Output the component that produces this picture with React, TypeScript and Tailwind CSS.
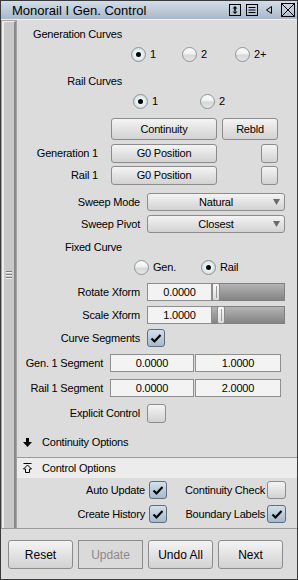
import React from "react";

function Radio({ checked, label }: { checked?: boolean; label: string }) {
  return (
    <div className="flex items-center">
      <div
        className={
          "flex h-[15px] w-[15px] items-center justify-center rounded-full border border-[#8e9498] " +
          (checked
            ? "bg-[radial-gradient(circle_at_50%_50%,#ffffff_0%,#e6f0f2_45%,#b9cbd2_100%)]"
            : "bg-[linear-gradient(#fbfbfb_0%,#f0f0f0_48%,#d6d6d6_52%,#e6e6e6_100%)]")
        }
      >
        {checked && <div className="h-[5px] w-[5px] rounded-full bg-black" />}
      </div>
      <span className="ml-[4px]">{label}</span>
    </div>
  );
}

function Btn({ className = "", children }: { className?: string; children?: React.ReactNode }) {
  return (
    <div
      className={
        "flex items-center justify-center rounded-[3px] border border-[#8c8c8c] bg-gradient-to-b from-[#f4f4f4] to-[#d2d2d2] " +
        className
      }
    >
      {children}
    </div>
  );
}

function Check({ checked, className = "" }: { checked?: boolean; className?: string }) {
  return (
    <div
      className={
        "flex items-center justify-center rounded-[3px] border " +
        (checked
          ? "border-[#5f6e7c] bg-gradient-to-b from-[#d4e0ea] to-[#a6b9cb] "
          : "border-[#8c8c8c] bg-gradient-to-b from-[#f4f4f4] to-[#d2d2d2] ") +
        className
      }
    >
      {checked && (
        <svg width="12" height="11" viewBox="0 0 12 11">
          <path d="M1.5 5.5 L4.5 8.5 L10.5 2" fill="none" stroke="#000" strokeWidth="2.2" />
        </svg>
      )}
    </div>
  );
}

function Field({ value, className = "" }: { value: string; className?: string }) {
  return (
    <div className={"flex items-center justify-center border border-[#8e8e8e] bg-[#f3f3f3] " + className}>
      {value}
    </div>
  );
}

function Dropdown({ value }: { value: string }) {
  return (
    <Btn className="relative h-[18px] w-[138px]">
      <span>{value}</span>
      <svg className="absolute right-[4px] top-[5px]" width="7" height="6" viewBox="0 0 7 6">
        <path d="M0 0 H7 L3.5 6 Z" fill="#6a6a6a" />
      </svg>
    </Btn>
  );
}

function Slider({ value, pos }: { value: string; pos: number }) {
  return (
    <div className="flex h-[18px]">
      <Field value={value} className="h-[18px] w-[65px]" />
      <div className="relative h-[18px] w-[73px] border-y border-r border-[#808080] bg-gradient-to-b from-[#b4b4b4] to-[#848484]">
        <div
          className="absolute top-[-1px] flex h-[18px] w-[8px] justify-center gap-[2px] rounded-[2px] border border-[#8a8a8a] bg-gradient-to-b from-[#fafafa] to-[#dcdcdc]"
          style={{ left: pos }}
        >
          <div className="mt-[2px] h-[12px] w-[1px] bg-[#9a9a9a]" />
        </div>
      </div>
    </div>
  );
}

export default function App() {
  return (
    <div className="flex h-[580px] w-[298px] flex-col border border-[#3a3a3a] bg-[#dcdcdc] font-['Liberation_Sans',Arial,sans-serif] text-[11px] leading-none text-black">
      {/* Title bar */}
      <div className="flex h-[19px] items-center border-b border-[#eef2f6] bg-gradient-to-b from-[#d3dde8] to-[#a9b8c8] pl-[11px] pr-[2px]">
        <span className="flex-1 text-[13px]">Monorail I Gen. Control</span>
        <svg width="66" height="14" viewBox="0 0 66 14">
          <rect x="0.5" y="1.5" width="11" height="11" fill="none" stroke="#000" />
          <path d="M6 3 L8.5 5.5 H3.5 Z M6 11 L8.5 8.5 H3.5 Z M5.2 5 H6.8 V9 H5.2 Z" fill="#000" />
          <rect x="17.5" y="1.5" width="11" height="11" fill="none" stroke="#000" />
          <path d="M19.5 4.5 H26.5 M19.5 7 H26.5 M19.5 9.5 H26.5" stroke="#000" />
          <path d="M42.5 3.5 L37.5 7 L42.5 10.5 Z" fill="none" stroke="#000" />
          <rect x="52.5" y="0.5" width="13" height="13" fill="none" stroke="#000" />
          <path d="M52.5 0.5 L65.5 13.5 M65.5 0.5 L52.5 13.5" stroke="#000" />
        </svg>
      </div>

      {/* Body */}
      <div className="flex h-[508px]">
        {/* Left strip */}
        <div className="flex w-[16px] flex-col bg-[#a2a2a2] pl-[1px] pr-[1px] pt-[1px]">
          <div className="flex flex-1 items-center justify-center border-l-[2px] border-r-[2px] border-t border-l-[#eeeeee] border-r-[#8a8a8a] border-t-[#f0f0f0] bg-[#c9c9c9]">
            <div className="flex flex-col gap-[1px] pr-[1px]">
              <div className="h-[2px] w-[6px] border-b border-[#f0f0f0] bg-[#7a7a7a]" />
              <div className="h-[2px] w-[6px] border-b border-[#f0f0f0] bg-[#7a7a7a]" />
              <div className="h-[2px] w-[6px] border-b border-[#f0f0f0] bg-[#7a7a7a]" />
            </div>
          </div>
        </div>

        {/* Content */}
        <div className="flex flex-1 flex-col tracking-[-0.2px]">
          <div className="mt-[6px] flex h-[16px] items-center">
            <div className="w-[105px] text-right">Generation Curves</div>
          </div>
          <div className="mt-[4px] flex h-[16px] items-center pl-[114px]">
            <div className="w-[51px]"><Radio checked label="1" /></div>
            <div className="w-[53px]"><Radio label="2" /></div>
            <Radio label="2+" />
          </div>

          <div className="mt-[11px] flex h-[16px] items-center">
            <div className="w-[105px] text-right">Rail Curves</div>
          </div>
          <div className="mt-[4px] flex h-[16px] items-center pl-[116px]">
            <div className="w-[67px]"><Radio checked label="1" /></div>
            <Radio label="2" />
          </div>

          <div className="mt-[9px] flex h-[22px] pl-[94px]">
            <Btn className="w-[106px]">Continuity</Btn>
            <Btn className="ml-[5px] w-[56px]">Rebld</Btn>
          </div>

          <div className="mt-[4px] flex h-[19px] items-center">
            <div className="w-[81px] text-right">Generation 1</div>
            <Btn className="ml-[13px] h-[19px] w-[106px]">G0 Position</Btn>
            <Btn className="ml-[44px] h-[19px] w-[17px]" />
          </div>
          <div className="mt-[3px] flex h-[19px] items-center">
            <div className="w-[81px] text-right">Rail 1</div>
            <Btn className="ml-[13px] h-[19px] w-[106px]">G0 Position</Btn>
            <Btn className="ml-[44px] h-[19px] w-[17px]" />
          </div>

          <div className="mt-[8px] flex h-[18px] items-center">
            <div className="w-[123px] text-right">Sweep Mode</div>
            <div className="ml-[7px]"><Dropdown value="Natural" /></div>
          </div>
          <div className="mt-[4px] flex h-[18px] items-center">
            <div className="w-[123px] text-right">Sweep Pivot</div>
            <div className="ml-[7px]"><Dropdown value="Closest" /></div>
          </div>

          <div className="mt-[6px] flex h-[16px] items-center">
            <div className="w-[105px] text-right">Fixed Curve</div>
          </div>
          <div className="mt-[4px] flex h-[16px] items-center pl-[117px]">
            <div className="w-[67px]"><Radio label="Gen." /></div>
            <Radio checked label="Rail" />
          </div>

          <div className="mt-[8px] flex h-[18px] items-center">
            <div className="w-[123px] text-right">Rotate Xform</div>
            <div className="ml-[7px]"><Slider value="0.0000" pos={0} /></div>
          </div>
          <div className="mt-[5px] flex h-[18px] items-center">
            <div className="w-[123px] text-right">Scale Xform</div>
            <div className="ml-[7px]"><Slider value="1.0000" pos={5} /></div>
          </div>

          <div className="mt-[5px] flex h-[18px] items-center">
            <div className="w-[123px] text-right">Curve Segments</div>
            <Check checked className="ml-[7px] h-[18px] w-[18px]" />
          </div>

          <div className="mt-[7px] flex h-[18px] items-center">
            <div className="w-[86px] text-right">Gen. 1 Segment</div>
            <Field value="0.0000" className="ml-[7px] h-[18px] w-[84px]" />
            <Field value="1.0000" className="ml-[1px] h-[18px] w-[86px]" />
          </div>
          <div className="mt-[7px] flex h-[18px] items-center">
            <div className="w-[86px] text-right">Rail 1 Segment</div>
            <Field value="0.0000" className="ml-[7px] h-[18px] w-[84px]" />
            <Field value="2.0000" className="ml-[1px] h-[18px] w-[86px]" />
          </div>

          <div className="mt-[7px] flex h-[19px] items-center">
            <div className="w-[123px] text-right">Explicit Control</div>
            <Check className="ml-[7px] h-[19px] w-[19px]" />
          </div>

          <div className="mt-[11px] flex h-[16px] items-center pl-[6px]">
            <svg width="9" height="9" viewBox="0 0 9 9">
              <path d="M3 0 H6 V4 H9 L4.5 9 L0 4 H3 Z" fill="#000" />
            </svg>
            <span className="ml-[10px]">Continuity Options</span>
          </div>

          <div className="mt-[7px] flex h-[21px] items-center border-t border-[#9c9c9c] bg-[#ececec] pl-[6px]">
            <svg width="9" height="10" viewBox="0 0 9 10">
              <path d="M0.5 0.5 H8.5" stroke="#000" />
              <path d="M4.5 2 L8.5 6 H6.5 V9.5 H2.5 V6 H0.5 Z" fill="none" stroke="#000" strokeLinejoin="miter" />
            </svg>
            <span className="ml-[10px]">Control Options</span>
          </div>

          <div className="mt-[3px] flex h-[18px] items-center">
            <div className="w-[128px] text-right">Auto Update</div>
            <Check checked className="ml-[4px] h-[18px] w-[18px]" />
            <div className="w-[98px] text-right">Continuity Check</div>
            <Check className="ml-[2px] h-[18px] w-[19px]" />
          </div>
          <div className="mt-[6px] flex h-[18px] items-center">
            <div className="w-[128px] text-right">Create History</div>
            <Check checked className="ml-[4px] h-[18px] w-[18px]" />
            <div className="w-[98px] text-right">Boundary Labels</div>
            <Check checked className="ml-[2px] h-[18px] w-[19px]" />
          </div>
        </div>
      </div>

      {/* Footer */}
      <div className="flex flex-1 items-start border-t border-[#9a9a9a] pl-[7px] pt-[11px] text-[12px]">
        <Btn className="h-[29px] w-[65px]">Reset</Btn>
        <div className="ml-[5px] flex h-[29px] w-[65px] items-center justify-center border border-[#8c8c8c] bg-[#dadada] text-[#8a8a8a]">
          Update
        </div>
        <Btn className="ml-[5px] h-[29px] w-[65px]">Undo All</Btn>
        <Btn className="ml-[5px] h-[29px] w-[65px]">Next</Btn>
      </div>
    </div>
  );
}
